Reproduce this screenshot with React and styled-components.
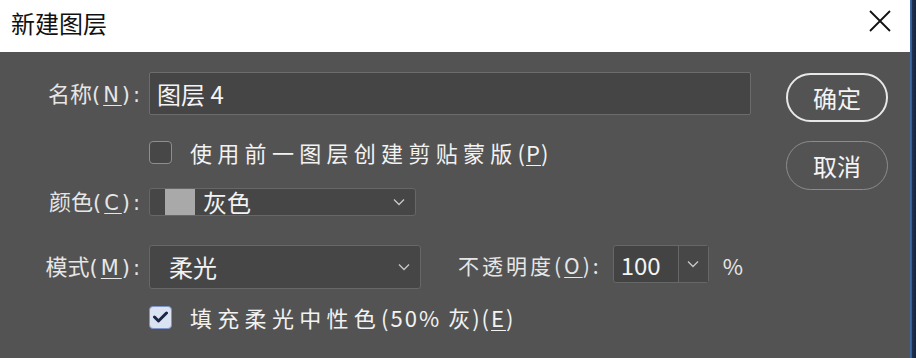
import React from "react";
import styled, { createGlobalStyle } from "styled-components";

const Global = createGlobalStyle`
  html, body { margin: 0; padding: 0; background: #535353; }
  body { font-family: "Noto Sans CJK SC", "Noto Sans", sans-serif; }
  * { box-sizing: border-box; }
  u { text-decoration-thickness: 1px; text-underline-offset: 3px; }
`;

const Screen = styled.div`
  width: 916px;
  height: 358px;
  display: flex;
  overflow: hidden;
`;

const Dialog = styled.div`
  flex: 1;
  display: flex;
  flex-direction: column;
  background: #535353;
`;

const Edge = styled.div`
  width: 6px;
  background: linear-gradient(to right, #2b4f80 0, #4f88c8 1px, #1f3352 2px, #15223a 100%);
`;

const TitleBar = styled.div`
  height: 52px;
  background: #ffffff;
  display: flex;
  align-items: center;
  justify-content: space-between;
  padding: 0 18px 0 11px;
`;

const Title = styled.div`
  font-size: 24px;
  color: #111;
  line-height: 1;
  margin-top: -7px;
`;

const CloseBtn = styled.div`
  width: 24px;
  height: 24px;
  display: flex;
  margin-top: -10px;
`;

const Body = styled.div`
  flex: 1;
  display: flex;
`;

const Form = styled.div`
  width: 752px;
  display: flex;
  flex-direction: column;
`;

const Row = styled.div`
  display: grid;
  grid-template-columns: 140px 1fr;
  column-gap: 9px;
  align-items: center;
  height: ${(p) => p.$h}px;
  margin-top: ${(p) => p.$mt}px;
`;

const Latin = styled.span`
  letter-spacing: ${(p) => p.$ls}px;
  font-family: ${(p) => (p.$wide ? '"DejaVu Sans", sans-serif' : "inherit")};
  font-size: ${(p) => (p.$wide ? "0.95em" : "1em")};
`;

const Label = styled.div`
  text-align: right;
  font-size: 22px;
  color: #e6e6e6;
  line-height: 1.2;
  white-space: nowrap;
  margin-right: -3px;
`;

const TextInput = styled.div`
  height: 43px;
  width: 602px;
  background: #454545;
  border: 1px solid #6c6c6c;
  border-radius: 2px;
  display: flex;
  align-items: center;
  padding-left: 7px;
  font-size: 24px;
  color: #f4f4f4;
`;

const CheckLine = styled.div`
  display: flex;
  align-items: center;
  gap: 18px;
`;

const Box = styled.div`
  width: 23px;
  height: 23px;
  border-radius: 4px;
  border: 1.5px solid ${(p) => (p.$checked ? "#7e95c8" : "#8e8e8e")};
  background: ${(p) => (p.$checked ? "#dbe2f1" : "#474747")};
  display: flex;
  align-items: center;
  justify-content: center;
`;

const CheckText = styled.div`
  font-size: 22px;
  letter-spacing: 5.3px;
  color: #f2f2f2;
  white-space: nowrap;
  line-height: 1.2;
`;

const Select = styled.div`
  width: ${(p) => p.$w}px;
  height: ${(p) => p.$h}px;
  background: #464646;
  border: 1px solid #676767;
  border-radius: 3px;
  display: flex;
  align-items: center;
  padding-left: ${(p) => p.$pl}px;
  padding-right: 10px;
  font-size: 24px;
  color: #f2f2f2;
`;

const Swatch = styled.div`
  width: 30px;
  height: 100%;
  background: #a9a9a9;
  margin-right: 8px;
`;

const SelectText = styled.div`
  flex: 1;
  line-height: 1;
`;

const ControlGroup = styled.div`
  display: flex;
  align-items: flex-start;
  align-self: start;
`;

const OpacityLabel = styled.div`
  margin-left: 37px;
  font-size: 21px;
  letter-spacing: 3px;
  color: #e6e6e6;
  line-height: 40px;
  white-space: nowrap;
`;

const NumberBox = styled.div`
  margin-left: 11px;
  width: 96px;
  height: 38px;
  border: 1px solid #676767;
  border-radius: 3px;
  background: #434343;
  display: flex;
`;

const NumberValue = styled.div`
  width: 65px;
  border-right: 1px solid #676767;
  font-size: 24px;
  color: #f4f4f4;
  padding-left: 7px;
  display: flex;
  align-items: center;
`;

const NumberArrow = styled.div`
  flex: 1;
  background: #474747;
  display: flex;
  align-items: center;
  justify-content: center;
`;

const Percent = styled.div`
  margin-left: 14px;
  font-size: 22px;
  color: #e6e6e6;
  line-height: 40px;
`;

const Actions = styled.div`
  display: flex;
  flex-direction: column;
  gap: 19px;
  padding: 21px 0 0 34px;
`;

const Button = styled.div`
  width: 102px;
  height: 49px;
  border-radius: 25px;
  border: ${(p) => (p.$primary ? "2px solid #e8e8e8" : "1px solid #8c8c8c")};
  display: flex;
  align-items: center;
  justify-content: center;
  font-size: 24px;
  color: #f4f4f4;
  line-height: 1;
`;

const Chevron = () => (
  <svg width="12" height="8" viewBox="0 0 12 8">
    <polyline points="1,1.5 6,6.5 11,1.5" fill="none" stroke="#c8c8c8" strokeWidth="1.3" />
  </svg>
);

export default function App() {
  return (
    <>
      <Global />
      <Screen>
        <Dialog>
          <TitleBar>
            <Title>新建图层</Title>
            <CloseBtn>
              <svg width="24" height="24" viewBox="0 0 24 24">
                <path d="M2 2 L22 22 M22 2 L2 22" stroke="#111" strokeWidth="1.8" fill="none" />
              </svg>
            </CloseBtn>
          </TitleBar>
          <Body>
            <Form>
              <Row $h={43} $mt={20}>
                <Label>名称<Latin $wide $ls={3}>(<u>N</u>):</Latin></Label>
                <TextInput>图层 4</TextInput>
              </Row>
              <Row $h={26} $mt={24}>
                <span />
                <CheckLine>
                  <Box />
                  <CheckText>使用前一图层创建剪贴蒙版<Latin $ls={1}>(<u>P</u>)</Latin></CheckText>
                </CheckLine>
              </Row>
              <Row $h={28} $mt={22}>
                <Label>颜色<Latin $wide $ls={3}>(<u>C</u>):</Latin></Label>
                <Select $w={267} $h={28} $pl={15}>
                  <Swatch />
                  <SelectText>灰色</SelectText>
                  <Chevron />
                </Select>
              </Row>
              <Row $h={44} $mt={30}>
                <Label>模式<Latin $wide $ls={3}>(<u>M</u>):</Latin></Label>
                <ControlGroup>
                  <Select $w={272} $h={44} $pl={19}>
                    <SelectText>柔光</SelectText>
                    <Chevron />
                  </Select>
                  <OpacityLabel>不透明度(<u>O</u>):</OpacityLabel>
                  <NumberBox>
                    <NumberValue>100</NumberValue>
                    <NumberArrow>
                      <Chevron />
                    </NumberArrow>
                  </NumberBox>
                  <Percent>%</Percent>
                </ControlGroup>
              </Row>
              <Row $h={26} $mt={15}>
                <span />
                <CheckLine>
                  <Box $checked>
                    <svg width="15" height="12" viewBox="0 0 15 12">
                      <polyline points="1.5,6 5.5,10 13.5,2" fill="none" stroke="#1b2546" strokeWidth="3" strokeLinejoin="round" strokeLinecap="round" />
                    </svg>
                  </Box>
                  <CheckText>填充柔光中性色<Latin $ls={2}>(50% 灰)(<u>E</u>)</Latin></CheckText>
                </CheckLine>
              </Row>
            </Form>
            <Actions>
              <Button $primary>确定</Button>
              <Button>取消</Button>
            </Actions>
          </Body>
        </Dialog>
        <Edge />
      </Screen>
    </>
  );
}
